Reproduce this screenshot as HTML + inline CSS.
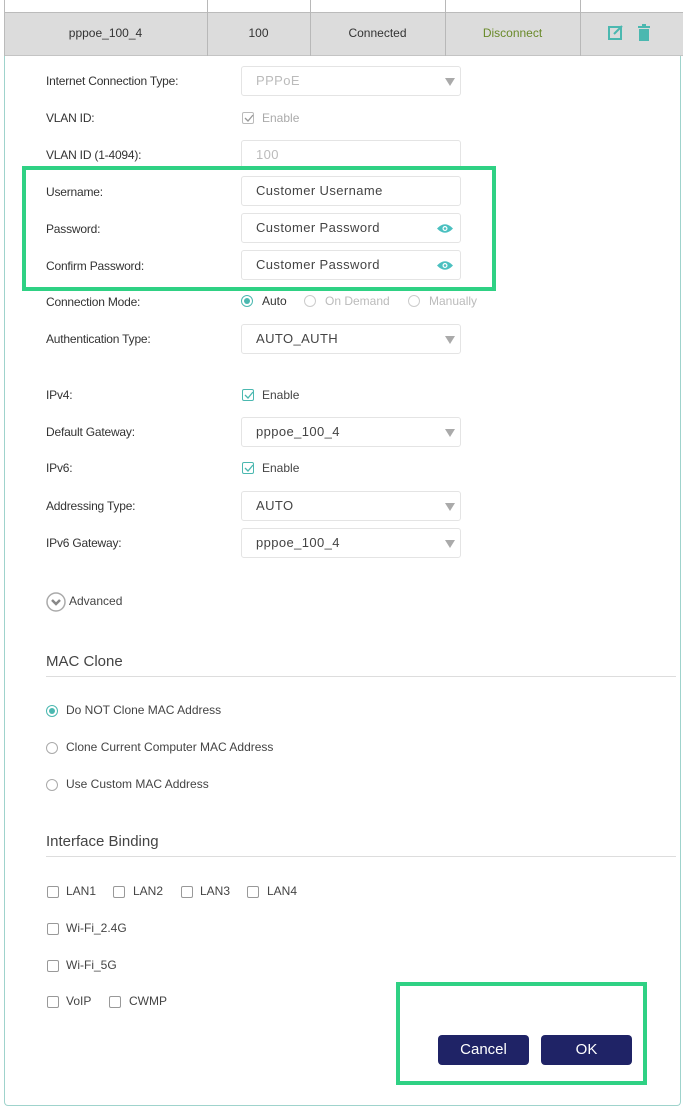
<!DOCTYPE html>
<html><head><meta charset="utf-8"><style>
*{box-sizing:border-box;margin:0;padding:0}
body{width:683px;height:1111px;background:#fff;font-family:"Liberation Sans",sans-serif;position:relative;overflow:hidden;color:#333}
.a{position:absolute}
.lbl{position:absolute;left:46px;font-size:12px;color:#333;transform:translateY(-50%);letter-spacing:-0.2px}
.in{position:absolute;left:241px;width:220px;height:30px;border:1px solid #e4e4e4;border-radius:3px;font-size:13px;color:#444;padding-left:14px;line-height:28px;letter-spacing:0.4px}
.in.dis{color:#bbb}
.arr{position:absolute;right:5px;top:11px;width:0;height:0;border-left:5px solid transparent;border-right:5px solid transparent;border-top:8px solid #aaa}
.eye{position:absolute;right:7px;top:9px}
.cb{position:absolute;width:12px;height:12px;border:1px solid #999;border-radius:2px;transform:translateY(-50%)}
.cbt{position:absolute;font-size:12px;transform:translateY(-50%);color:#444}
.rd{position:absolute;width:12px;height:12px;border:1px solid #aaa;border-radius:50%;transform:translateY(-50%)}
.rd.on{border-color:#4bb8b0}
.rd.on::after{content:"";position:absolute;left:2px;top:2px;width:6px;height:6px;border-radius:50%;background:#4bb8b0}
.chk{border-color:#4bb8b0}
.h{position:absolute;left:46px;font-size:15px;color:#444}
.line{position:absolute;left:46px;width:630px;height:1px;background:#ddd}
.btn{position:absolute;top:1035px;height:30px;background:#1f2366;color:#fff;border-radius:4px;font-size:15px;text-align:center;line-height:30px}
.green{position:absolute;border:4px solid #2fd184}
</style></head><body>
<!-- header -->
<div class="a" style="left:4px;top:12px;width:679px;height:44px;background:#dcdcdc;border-top:1px solid #bbb;border-bottom:1px solid #c4c4c4"></div>
<div class="a" style="left:4px;top:0;width:1px;height:56px;background:#bbb"></div>
<div class="a" style="left:207px;top:0;width:1px;height:56px;background:#b8b8b8"></div>
<div class="a" style="left:310px;top:0;width:1px;height:56px;background:#b8b8b8"></div>
<div class="a" style="left:445px;top:0;width:1px;height:56px;background:#b8b8b8"></div>
<div class="a" style="left:580px;top:0;width:1px;height:56px;background:#b8b8b8"></div>
<div class="a" style="left:4px;top:26px;width:203px;text-align:center;font-size:12px">pppoe_100_4</div>
<div class="a" style="left:207px;top:26px;width:103px;text-align:center;font-size:12px">100</div>
<div class="a" style="left:310px;top:26px;width:135px;text-align:center;font-size:12px">Connected</div>
<div class="a" style="left:445px;top:26px;width:135px;text-align:center;font-size:12px;color:#6a8a2a">Disconnect</div>
<svg class="a" style="left:607px;top:24px" width="18" height="18" viewBox="0 0 18 18"><rect x="2" y="3" width="12" height="12" fill="none" stroke="#4bb8b0" stroke-width="2"/><path d="M7 10 L15 2" stroke="#4bb8b0" stroke-width="2"/></svg>
<svg class="a" style="left:637px;top:24px" width="14" height="18" viewBox="0 0 14 18"><rect x="1" y="2" width="12" height="2" fill="#4bb8b0"/><rect x="5" y="0" width="4" height="2" fill="#4bb8b0"/><rect x="2" y="5" width="10" height="12" fill="#4bb8b0"/></svg>
<!-- panel border -->
<div class="a" style="left:4px;top:56px;width:677px;height:1050px;border:1px solid #9fd3cc;border-top:none;border-radius:0 0 4px 4px"></div>

<div class="lbl" style="top:81px">Internet Connection Type:</div>
<div class="in dis" style="top:66px">PPPoE<div class="arr"></div></div>
<div class="lbl" style="top:118px">VLAN ID:</div>
<div class="cb" style="left:242px;top:118px;border-color:#bbb"></div><svg class="a" style="left:244px;top:113px" width="10" height="10"><path d="M1 5 L4 8 L9 2" stroke="#999" fill="none" stroke-width="1.3"/></svg>
<div class="cbt" style="left:262px;top:118px;color:#aaa">Enable</div>
<div class="lbl" style="top:155px">VLAN ID (1-4094):</div>
<div class="in dis" style="top:140px">100</div>

<div class="lbl" style="top:192px">Username:</div>
<div class="in" style="top:176px">Customer Username</div>
<div class="lbl" style="top:229px">Password:</div>
<div class="in" style="top:213px">Customer Password<svg class="eye" width="16" height="11" viewBox="0 0 16 11"><path d="M0 5.5 Q8 -3 16 5.5 Q8 14 0 5.5Z" fill="#4bc0c0"/><circle cx="8" cy="5.5" r="2.5" fill="#fff"/><circle cx="8" cy="5.5" r="1.3" fill="#4bc0c0"/></svg></div>
<div class="lbl" style="top:266px">Confirm Password:</div>
<div class="in" style="top:250px">Customer Password<svg class="eye" width="16" height="11" viewBox="0 0 16 11"><path d="M0 5.5 Q8 -3 16 5.5 Q8 14 0 5.5Z" fill="#4bc0c0"/><circle cx="8" cy="5.5" r="2.5" fill="#fff"/><circle cx="8" cy="5.5" r="1.3" fill="#4bc0c0"/></svg></div>

<div class="lbl" style="top:302px">Connection Mode:</div>
<div class="rd on" style="left:241px;top:301px"></div><div class="cbt" style="left:262px;top:301px;color:#333">Auto</div>
<div class="rd" style="left:304px;top:301px;border-color:#ccc"></div><div class="cbt" style="left:325px;top:301px;color:#bbb">On Demand</div>
<div class="rd" style="left:408px;top:301px;border-color:#ccc"></div><div class="cbt" style="left:429px;top:301px;color:#bbb">Manually</div>
<div class="lbl" style="top:339px">Authentication Type:</div>
<div class="in" style="top:324px">AUTO_AUTH<div class="arr"></div></div>

<div class="lbl" style="top:395px">IPv4:</div>
<div class="cb chk" style="left:242px;top:395px"></div><svg class="a" style="left:244px;top:390px" width="10" height="10"><path d="M1 5 L4 8 L9 2" stroke="#4bb8b0" fill="none" stroke-width="1.3"/></svg>
<div class="cbt" style="left:262px;top:395px">Enable</div>
<div class="lbl" style="top:432px">Default Gateway:</div>
<div class="in" style="top:417px">pppoe_100_4<div class="arr"></div></div>
<div class="lbl" style="top:468px">IPv6:</div>
<div class="cb chk" style="left:242px;top:468px"></div><svg class="a" style="left:244px;top:463px" width="10" height="10"><path d="M1 5 L4 8 L9 2" stroke="#4bb8b0" fill="none" stroke-width="1.3"/></svg>
<div class="cbt" style="left:262px;top:468px">Enable</div>
<div class="lbl" style="top:506px">Addressing Type:</div>
<div class="in" style="top:491px">AUTO<div class="arr"></div></div>
<div class="lbl" style="top:543px">IPv6 Gateway:</div>
<div class="in" style="top:528px">pppoe_100_4<div class="arr"></div></div>

<svg class="a" style="left:46px;top:592px" width="20" height="20" viewBox="0 0 20 20"><circle cx="10" cy="10" r="9" fill="none" stroke="#aaa" stroke-width="1.5"/><path d="M6 8 L10 12 L14 8" stroke="#888" fill="none" stroke-width="2.5"/></svg>
<div class="cbt" style="left:69px;top:601px">Advanced</div>

<div class="h" style="top:653px">MAC Clone</div>
<div class="line" style="top:676px"></div>
<div class="rd on" style="left:46px;top:711px"></div><div class="cbt" style="left:66px;top:710px">Do NOT Clone MAC Address</div>
<div class="rd" style="left:46px;top:748px"></div><div class="cbt" style="left:66px;top:747px">Clone Current Computer MAC Address</div>
<div class="rd" style="left:46px;top:785px"></div><div class="cbt" style="left:66px;top:784px">Use Custom MAC Address</div>

<div class="h" style="top:833px">Interface Binding</div>
<div class="line" style="top:856px"></div>
<div class="cb" style="left:47px;top:892px"></div><div class="cbt" style="left:66px;top:891px">LAN1</div>
<div class="cb" style="left:113px;top:892px"></div><div class="cbt" style="left:133px;top:891px">LAN2</div>
<div class="cb" style="left:181px;top:892px"></div><div class="cbt" style="left:200px;top:891px">LAN3</div>
<div class="cb" style="left:247px;top:892px"></div><div class="cbt" style="left:267px;top:891px">LAN4</div>
<div class="cb" style="left:47px;top:929px"></div><div class="cbt" style="left:66px;top:928px">Wi-Fi_2.4G</div>
<div class="cb" style="left:47px;top:966px"></div><div class="cbt" style="left:66px;top:965px">Wi-Fi_5G</div>
<div class="cb" style="left:47px;top:1002px"></div><div class="cbt" style="left:66px;top:1001px">VoIP</div>
<div class="cb" style="left:109px;top:1002px"></div><div class="cbt" style="left:129px;top:1001px">CWMP</div>

<div class="btn" style="left:438px;width:91px">Cancel</div>
<div class="btn" style="left:541px;width:91px">OK</div>

<div class="green" style="left:22px;top:166px;width:474px;height:125px"></div>
<div class="green" style="left:396px;top:982px;width:251px;height:103px"></div>
</body></html>
